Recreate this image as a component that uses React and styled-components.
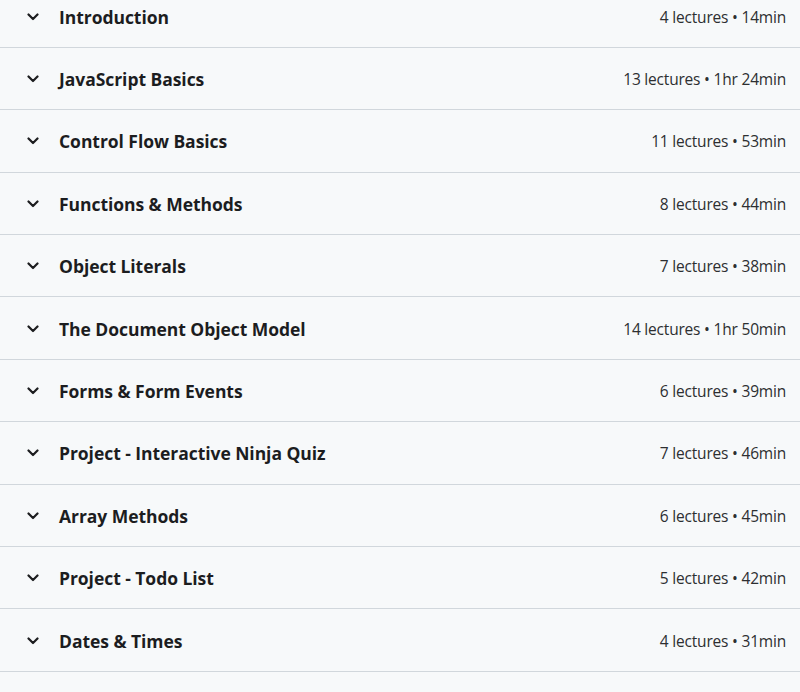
import React from "react";
import styled, { createGlobalStyle } from "styled-components";

const GlobalStyle = createGlobalStyle`
  html, body {
    margin: 0;
    padding: 0;
    background: #f7f9fa;
    font-family: "Open Sans", "Noto Sans", sans-serif;
    color: #2d2f31;
  }
`;

const List = styled.div`
  display: flex;
  flex-direction: column;
  margin-top: -14.6px;
  width: 800px;
  height: 707px;
  overflow: hidden;
`;

const Row = styled.div`
  display: flex;
  align-items: center;
  box-sizing: border-box;
  height: 62.4px;
  flex-shrink: 0;
  padding: 1px 14px 0 26px;
  border-bottom: 1px solid #d1d7dc;
`;

const Chevron = styled.span`
  display: flex;
  width: 14px;
  justify-content: center;
  margin-right: 19px;
  color: #1c1d1f;
`;

const Title = styled.span`
  flex: 1;
  font-size: 17.5px;
  font-weight: 700;
  letter-spacing: -0.05px;
  color: #1c1d1f;
`;

const Meta = styled.span`
  font-size: 15.5px;
  font-weight: 400;
  letter-spacing: -0.2px;
`;

const sections = [
  ["Introduction", 4, "14min"],
  ["JavaScript Basics", 13, "1hr 24min"],
  ["Control Flow Basics", 11, "53min"],
  ["Functions & Methods", 8, "44min"],
  ["Object Literals", 7, "38min"],
  ["The Document Object Model", 14, "1hr 50min"],
  ["Forms & Form Events", 6, "39min"],
  ["Project - Interactive Ninja Quiz", 7, "46min"],
  ["Array Methods", 6, "45min"],
  ["Project - Todo List", 5, "42min"],
  ["Dates & Times", 4, "31min"],
];

const ChevronIcon = () => (
  <svg width="12" height="8" viewBox="0 0 12 8">
    <path
      d="M1.5 1.5 L6 6 L10.5 1.5"
      fill="none"
      stroke="currentColor"
      strokeWidth="2.2"
      strokeLinecap="round"
      strokeLinejoin="round"
    />
  </svg>
);

export default function App() {
  return (
    <>
      <GlobalStyle />
      <List>
        {sections.map(([title, count, time]) => (
          <Row key={title}>
            <Chevron>
              <ChevronIcon />
            </Chevron>
            <Title>{title}</Title>
            <Meta>
              {count} lectures • {time}
            </Meta>
          </Row>
        ))}
      </List>
    </>
  );
}
